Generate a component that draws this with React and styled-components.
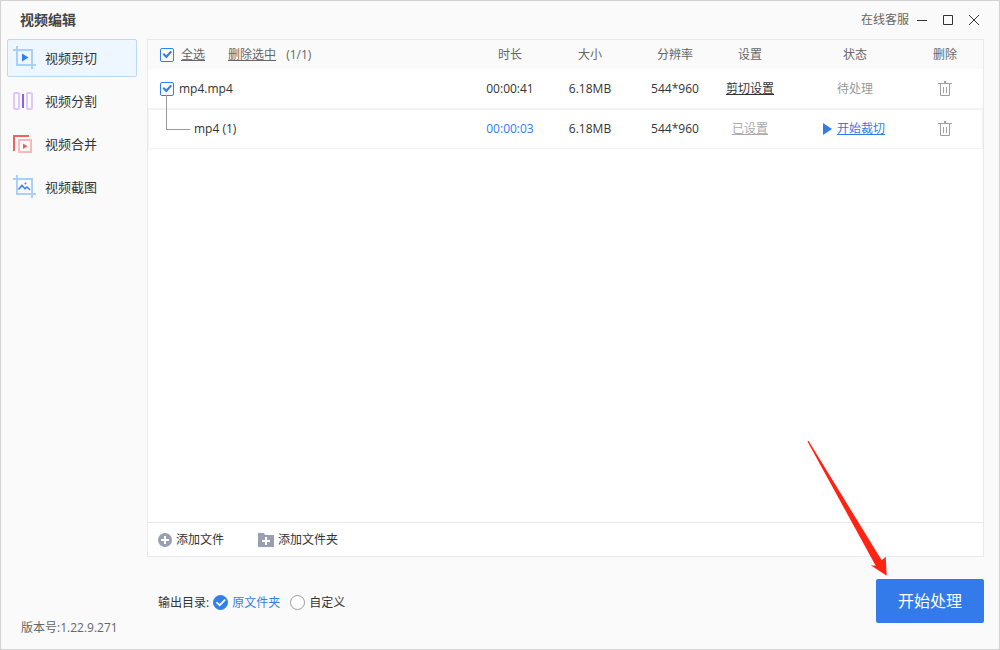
import React, { useState } from "react";
import styled, { createGlobalStyle } from "styled-components";

const GlobalStyle = createGlobalStyle`
  * {
    box-sizing: border-box;
  }

  body {
    margin: 0;
    background: #fafafa;
    color: #333;
    font-family: "Open Sans", "Noto Sans CJK SC", sans-serif;
    font-size: 12px;
    line-height: 16px;
  }

  button, input {
    margin: 0;
    font-family: inherit;
  }

  svg {
    display: block;
    flex: none;
  }
`;

// Window
const Window = styled.div`
  display: flex;
  flex-direction: column;
  min-height: 100vh;
  border: 1px solid #d2d2d2;
  background: #fafafa;
`;

const TitleBar = styled.header`
  display: flex;
  align-items: center;
  justify-content: space-between;
  height: 38px;
  padding: 0 20px 0 19px;
`;

const Title = styled.h1`
  margin: 0;
  color: #444;
  font-size: 14px;
  font-weight: 600;
  line-height: 20px;
`;

const TitleActions = styled.div`
  display: flex;
  align-items: center;
  gap: 16px;
`;

const ServiceLink = styled.a`
  margin-right: -8px;
  color: #666;
  text-decoration: none;
`;

const IconButton = styled.button`
  display: inline-block;
  padding: 0;
  border: none;
  background: none;
  color: ${(props) => props.$color || "#333"};
  cursor: pointer;
  vertical-align: middle;
`;

const Body = styled.div`
  display: flex;
  flex: 1;
`;

// Sidebar
const Sidebar = styled.aside`
  display: flex;
  flex-direction: column;
  flex: none;
  justify-content: space-between;
  width: 146px;
  padding: 0 10px 13px 6px;
`;

const Nav = styled.nav`
  display: flex;
  flex-direction: column;
  gap: 5px;
`;

const NavItem = styled.button`
  display: flex;
  align-items: center;
  gap: 8px;
  height: 38px;
  padding: 0 5px;
  border: 1px solid ${(props) => (props.$active ? "#b9d8fb" : "transparent")};
  border-radius: 2px;
  background: ${(props) => (props.$active ? "#eef6ff" : "transparent")};
  color: #333;
  font-size: 13px;
  line-height: 20px;
  cursor: pointer;
`;

const Version = styled.div`
  padding-left: 14px;
  color: #666;
`;

// Main area
const Main = styled.main`
  display: flex;
  flex: 1;
  flex-direction: column;
  padding-right: 15px;
`;

const Panel = styled.section`
  display: flex;
  flex: 1;
  flex-direction: column;
  border: 1px solid #e9e9e9;
  background: #fff;
`;

const FileTable = styled.table`
  width: 100%;
  border-spacing: 0;
  table-layout: fixed;
`;

const Col = styled.col`
  width: ${(props) => props.$width};
`;

const Th = styled.th`
  height: 29px;
  padding: 0;
  background: #fafafa;
  color: #666;
  font-weight: 400;
  text-align: center;

  &:first-child {
    padding-left: 12px;
  }

  &:last-child {
    padding-right: 23px;
  }
`;

const Td = styled.td`
  height: ${(props) => (props.$child ? "39px" : "41px")};
  padding: 0;
  border: 0 solid #f2f2f2;
  border-bottom-width: ${(props) => (props.$child ? "1px" : "2px")};
  color: ${(props) => props.$color || "#333"};
  text-align: center;

  &:first-child {
    padding-left: ${(props) => (props.$child ? "11px" : "12px")};
    border-left-width: ${(props) => (props.$child ? "1px" : "0")};
  }

  &:last-child {
    padding-right: ${(props) => (props.$child ? "22px" : "23px")};
    border-right-width: ${(props) => (props.$child ? "1px" : "0")};
  }
`;

const NameCell = styled.div`
  display: flex;
  align-items: center;
  gap: ${(props) => props.$gap};
`;

const ChildName = styled.div`
  position: relative;
  padding-left: 34px;
  text-align: left;

  /* tree line down from the parent's checkbox */
  &::before {
    content: "";
    position: absolute;
    left: 6px;
    bottom: 7px;
    width: 23px;
    height: 34px;
    border-left: 1px solid #999;
    border-bottom: 1px solid #999;
  }
`;

const TextLink = styled.a`
  color: ${(props) => props.$color || "#333"};
  text-decoration: underline;
`;

const DeleteLink = styled(TextLink)`
  margin-left: 16px;
`;

const StartLink = styled.div`
  display: flex;
  align-items: center;
  justify-content: center;
  gap: 5px;
  padding-right: 2px;
`;

const Checkbox = styled.input`
  position: relative;
  flex: none;
  width: 14px;
  height: 14px;
  border: 1px solid #2f7ff5;
  border-radius: 2px;
  background: #fff;
  appearance: none;

  &:checked::after {
    content: "";
    position: absolute;
    inset: 0;
    background: #2f7ff5;
    clip-path: polygon(13% 50%, 25% 38%, 44% 57%, 79% 18%, 92% 30%, 45% 84%);
  }
`;

const AddBar = styled.div`
  display: flex;
  align-items: center;
  gap: 34px;
  height: 34px;
  margin-top: auto;
  padding-left: 10px;
  border-top: 1px solid #e9e9e9;
`;

const AddButton = styled.button`
  display: flex;
  align-items: center;
  gap: 4px;
  padding: 0;
  border: none;
  background: none;
  color: #333;
  font-size: 12px;
  line-height: 16px;
  cursor: pointer;
`;

const OutputBar = styled.div`
  display: flex;
  align-items: center;
  justify-content: space-between;
  padding: 22px 0 26px 11px;
`;

const OutputOptions = styled.fieldset`
  display: flex;
  align-items: center;
  gap: 10px;
  margin: 0;
  padding: 3px 0 0;
  border: none;
`;

const OutputLabel = styled.span`
  margin-right: -6px;
`;

const RadioLabel = styled.label`
  display: flex;
  align-items: center;
  gap: 4px;
  color: ${(props) => (props.$checked ? "#337eea" : "#333")};
`;

const Radio = styled.input`
  position: relative;
  width: 15px;
  height: 15px;
  border: 1px solid #999;
  border-radius: 50%;
  background: #fff;
  appearance: none;

  &:checked {
    border-color: #337eea;
    background: #337eea;
  }

  &:checked::after {
    content: "";
    position: absolute;
    inset: 0;
    background: #fff;
    clip-path: polygon(12% 52%, 23% 44%, 42% 61%, 80% 24%, 89% 32%, 43% 80%);
  }
`;

const StartWrap = styled.div`
  position: relative;
`;

const StartButton = styled.button`
  display: block;
  width: 108px;
  height: 44px;
  padding: 0;
  border: none;
  border-radius: 2px;
  background: #337aea;
  color: #fff;
  font-size: 16px;
  line-height: 24px;
  cursor: pointer;
`;

const Pointer = styled.svg`
  position: absolute;
  right: 96px;
  bottom: 46px;
  pointer-events: none;
`;

// Icons
const CropFrame = ({ children }) => (
  <svg width="24" height="24" viewBox="0 0 24 24" fill="none">
    <path d="M4 0v19h19M0 4h19v19" stroke="#a9d0fb" strokeWidth="2" />
    {children}
  </svg>
);

const CutIcon = () => (
  <CropFrame>
    <path d="M9 7.5l6.5 4-6.5 4z" fill="#2f7ff5" />
  </CropFrame>
);

const SplitIcon = () => (
  <svg width="24" height="24" viewBox="0 0 24 24" fill="none">
    <rect x="1" y="4" width="5" height="16" rx="1" stroke="#dcc8fa" strokeWidth="2" />
    <rect x="14" y="4" width="5" height="16" rx="1" stroke="#dcc8fa" strokeWidth="2" />
    <path d="M10 5v14" stroke="#8f5fe8" strokeWidth="2" />
  </svg>
);

const MergeIcon = () => (
  <svg width="24" height="24" viewBox="0 0 24 24" fill="none">
    <path d="M1 19V4h15" stroke="#f0625f" strokeWidth="2" />
    <rect x="6" y="8" width="12" height="12" stroke="#f7baba" strokeWidth="2" />
    <path d="M10 11.5l4.5 2.7-4.5 2.8z" fill="#ee5a5f" />
  </svg>
);

const CaptureIcon = () => (
  <CropFrame>
    <path d="M5.5 14.5l3.5-4 3 3.2 2-1.7 3 3" stroke="#3d84ee" strokeWidth="1.6" />
    <circle cx="12.5" cy="8.5" r="1" fill="#3d84ee" />
  </CropFrame>
);

const TrashIcon = () => (
  <svg width="14" height="16" viewBox="0 0 14 16" fill="none" stroke="currentColor">
    <path d="M0 2.5h14M2.5 2.5v12h9v-12M5.5 6v6M8.5 6v6" />
    <path d="M6 1h2" strokeWidth="2" />
  </svg>
);

const PlayIcon = () => (
  <svg width="9" height="12" viewBox="0 0 9 12">
    <path d="M0 0l9 6-9 6z" fill="#337aea" />
  </svg>
);

const AddFileIcon = () => (
  <svg width="14" height="14" viewBox="0 0 14 14">
    <circle cx="7" cy="7" r="7" fill="#989fb3" />
    <path d="M7 3v8M3 7h8" stroke="#fff" strokeWidth="2" />
  </svg>
);

const AddFolderIcon = () => (
  <svg width="16" height="14" viewBox="0 0 16 14">
    <path d="M0 0h6l1 2h9v12H0z" fill="#989fb3" />
    <path d="M8 4v8M4 8h8" stroke="#fff" strokeWidth="2" />
  </svg>
);

const windowIcons = [
  { label: "最小化", path: "M0 5.5h10" },
  { label: "最大化", path: "M.5.5h9v9h-9z" },
  { label: "关闭", path: "M0 0l10 10M10 0L0 10" },
];

const navItems = [
  { label: "视频剪切", Icon: CutIcon },
  { label: "视频分割", Icon: SplitIcon },
  { label: "视频合并", Icon: MergeIcon },
  { label: "视频截图", Icon: CaptureIcon },
];

const columns = [
  { label: "时长", width: "80px" },
  { label: "大小", width: "80px" },
  { label: "分辨率", width: "90px" },
  { label: "设置", width: "60px" },
  { label: "状态", width: "150px" },
  { label: "删除", width: "53px" },
];

const DeleteButton = () => (
  <IconButton type="button" aria-label="删除" $color="#a0a0a0">
    <TrashIcon />
  </IconButton>
);

const App = () => {
  const [active, setActive] = useState("视频剪切");
  const [checked, setChecked] = useState(true);
  const [output, setOutput] = useState("source");

  const toggle = () => setChecked(!checked);

  return (
    <Window>
      <GlobalStyle />
      <TitleBar>
        <Title>视频编辑</Title>
        <TitleActions>
          <ServiceLink href="#service">在线客服</ServiceLink>
          {windowIcons.map(({ label, path }) => (
            <IconButton key={label} type="button" aria-label={label}>
              <svg width="10" height="10" viewBox="0 0 10 10" fill="none" stroke="currentColor">
                <path d={path} />
              </svg>
            </IconButton>
          ))}
        </TitleActions>
      </TitleBar>

      <Body>
        <Sidebar>
          <Nav>
            {navItems.map(({ label, Icon }) => (
              <NavItem
                key={label}
                type="button"
                $active={active === label}
                onClick={() => setActive(label)}
              >
                <Icon />
                {label}
              </NavItem>
            ))}
          </Nav>
          <Version>版本号:1.22.9.271</Version>
        </Sidebar>

        <Main>
          <Panel>
            <FileTable>
              <colgroup>
                <Col $width="auto" />
                {columns.map(({ label, width }) => (
                  <Col key={label} $width={width} />
                ))}
              </colgroup>
              <thead>
                <tr>
                  <Th>
                    <NameCell $gap="7px">
                      <Checkbox type="checkbox" id="all" aria-label="全选" checked={checked} onChange={toggle} />
                      <TextLink href="#all" $color="#666">全选</TextLink>
                      <DeleteLink href="#delete" $color="#666">删除选中</DeleteLink>
                      <span>&nbsp;(1/1)</span>
                    </NameCell>
                  </Th>
                  {columns.map(({ label }) => (
                    <Th key={label}>{label}</Th>
                  ))}
                </tr>
              </thead>
              <tbody>
                <tr>
                  <Td>
                    <NameCell $gap="5px">
                      <Checkbox type="checkbox" id="file" checked={checked} onChange={toggle} />
                      <label htmlFor="file">mp4.mp4</label>
                    </NameCell>
                  </Td>
                  <Td>00:00:41</Td>
                  <Td>6.18MB</Td>
                  <Td>544*960</Td>
                  <Td><TextLink href="#settings">剪切设置</TextLink></Td>
                  <Td $color="#999">待处理</Td>
                  <Td><DeleteButton /></Td>
                </tr>
                <tr>
                  <Td $child>
                    <ChildName>mp4 (1)</ChildName>
                  </Td>
                  <Td $child $color="#337aea">00:00:03</Td>
                  <Td $child>6.18MB</Td>
                  <Td $child>544*960</Td>
                  <Td $child><TextLink href="#settings" $color="#aaa">已设置</TextLink></Td>
                  <Td $child>
                    <StartLink>
                      <PlayIcon />
                      <TextLink href="#start" $color="#337aea">开始裁切</TextLink>
                    </StartLink>
                  </Td>
                  <Td $child><DeleteButton /></Td>
                </tr>
              </tbody>
            </FileTable>
            <AddBar>
              <AddButton type="button">
                <AddFileIcon />
                添加文件
              </AddButton>
              <AddButton type="button">
                <AddFolderIcon />
                添加文件夹
              </AddButton>
            </AddBar>
          </Panel>

          <OutputBar>
            <OutputOptions aria-label="输出目录">
              <OutputLabel>输出目录:</OutputLabel>
              <RadioLabel $checked={output === "source"}>
                <Radio
                  type="radio"
                  name="output"
                  checked={output === "source"}
                  onChange={() => setOutput("source")}
                />
                原文件夹
              </RadioLabel>
              <RadioLabel $checked={output === "custom"}>
                <Radio
                  type="radio"
                  name="output"
                  checked={output === "custom"}
                  onChange={() => setOutput("custom")}
                />
                自定义
              </RadioLabel>
            </OutputOptions>
            <StartWrap>
              <StartButton type="button">开始处理</StartButton>
              <Pointer width="81" height="137" viewBox="0 0 81 137">
                <path d="M.5 1.5L1.5.8 74.7 120.3 78.7 116.7 79.7 135.7 63.7 125.3 68.7 125.7z" fill="#ff2313" />
              </Pointer>
            </StartWrap>
          </OutputBar>
        </Main>
      </Body>
    </Window>
  );
};

export default App;
